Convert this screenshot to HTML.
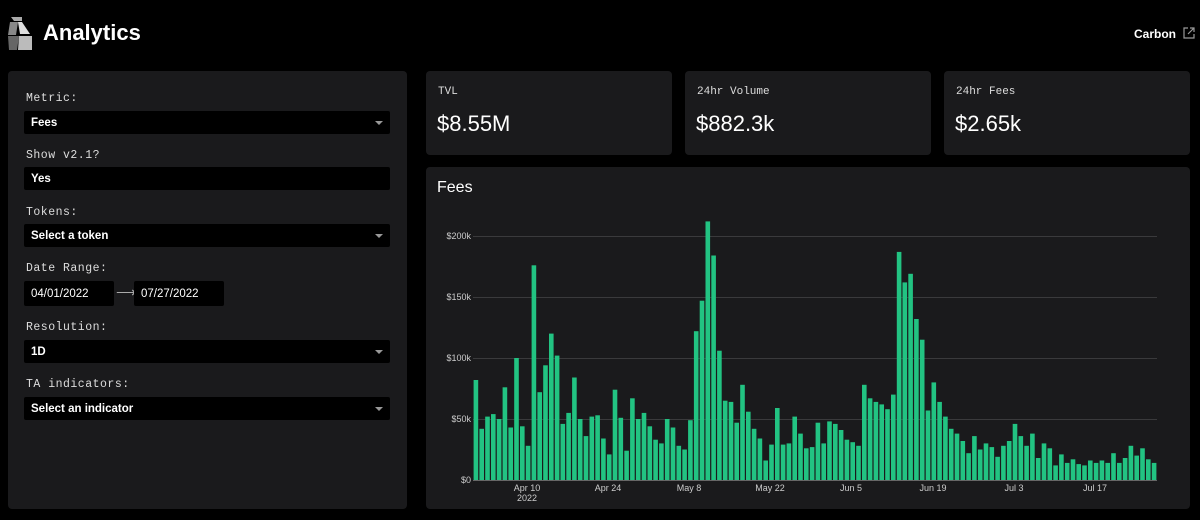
<!DOCTYPE html>
<html><head><meta charset="utf-8"><style>
*{box-sizing:border-box;margin:0;padding:0}
body{width:1200px;height:520px;background:#000;color:#fff;font-family:"Liberation Sans",sans-serif;position:relative;overflow:hidden}
.panel{position:absolute;background:#1a1a1c;border-radius:4px}
.lbl{position:absolute;left:18px;font-family:"Liberation Mono",monospace;font-size:11.5px;color:#ddd;letter-spacing:.5px}
.sel{position:absolute;left:16px;width:366px;height:23px;background:#000;font-size:11.5px;font-weight:bold;padding:6px 0 0 7px;border-radius:2px}
.sel .c{position:absolute;right:7px;top:10px;border-left:4px solid transparent;border-right:4px solid transparent;border-top:4px solid #999}
.card .t{position:absolute;left:12px;top:15px;font-family:"Liberation Mono",monospace;font-size:11px;color:#ddd}
.card .v{position:absolute;left:11px;top:40px;font-size:22px}
</style></head><body>
<svg style="position:absolute;left:8px;top:17px" width="26" height="33" viewBox="0 0 26 33">
<polygon points="3,0 14,0 14,4 6,4" fill="#aaa"/><polygon points="2,5 10,5 8,18 0,18" fill="#888"/><polygon points="10,5 14,5 22,17 12,17" fill="#ddd"/><polygon points="0,19 11,19 9,33 1,33" fill="#666"/><polygon points="11,19 24,19 24,33 10,33" fill="#bbb"/></svg>
<div style="position:absolute;left:43px;top:20px;font-size:22px;font-weight:bold">Analytics</div>
<div style="position:absolute;left:1134px;top:27px;font-size:12px;font-weight:bold">Carbon</div>
<svg style="position:absolute;left:1183px;top:27px" width="12" height="12" viewBox="0 0 12 12" fill="none" stroke="#999" stroke-width="1.2"><path d="M5 1H1v10h10V7M7 1h4v4M11 1L5 7"/></svg>

<div class="panel" style="left:8px;top:71px;width:399px;height:438px">
<div class="lbl" style="top:21px">Metric:</div>
<div class="sel" style="top:40px">Fees<span class="c"></span></div>
<div class="lbl" style="top:78px">Show v2.1?</div>
<div class="sel" style="top:96px">Yes</div>
<div class="lbl" style="top:135px">Tokens:</div>
<div class="sel" style="top:153px">Select a token<span class="c"></span></div>
<div class="lbl" style="top:191px">Date Range:</div>
<div class="sel" style="top:210px;width:90px;height:25px;font-weight:normal;padding-top:7px">04/01/2022</div>
<div style="position:absolute;left:108px;top:213px;color:#aaa;font-size:14px">⟶</div>
<div class="sel" style="left:126px;top:210px;width:90px;height:25px;font-weight:normal;padding-top:7px">07/27/2022</div>
<div class="lbl" style="top:250px">Resolution:</div>
<div class="sel" style="top:269px">1D<span class="c"></span></div>
<div class="lbl" style="top:307px">TA indicators:</div>
<div class="sel" style="top:326px">Select an indicator<span class="c"></span></div>
</div>

<div class="panel card" style="left:426px;top:71px;width:246px;height:84px"><div class="t">TVL</div><div class="v">$8.55M</div></div>
<div class="panel card" style="left:685px;top:71px;width:246px;height:84px"><div class="t">24hr Volume</div><div class="v">$882.3k</div></div>
<div class="panel card" style="left:944px;top:71px;width:246px;height:84px"><div class="t">24hr Fees</div><div class="v">$2.65k</div></div>

<div class="panel" style="left:426px;top:167px;width:764px;height:342px">
<div style="position:absolute;left:11px;top:12px;font-size:16px">Fees</div></div>
<svg id="ch" style="position:absolute;left:0;top:0" width="1200" height="520" font-family="Liberation Sans" font-size="9" fill="#ccc">
<g stroke="#3a3a3c" stroke-width="1"><line x1="473" x2="1157" y1="236.5" y2="236.5"/><line x1="473" x2="1157" y1="297.5" y2="297.5"/><line x1="473" x2="1157" y1="358.5" y2="358.5"/><line x1="473" x2="1157" y1="419.5" y2="419.5"/></g>
<g text-anchor="end"><text x="471" y="239">$200k</text><text x="471" y="300">$150k</text><text x="471" y="361">$100k</text><text x="471" y="422">$50k</text><text x="471" y="483">$0</text></g>
<g id="bars" fill="#22c382"></g>
<line x1="473" x2="1157" y1="480.5" y2="480.5" stroke="#666"/>
<g text-anchor="middle"><text x="527" y="491">Apr 10</text><text x="527" y="501">2022</text><text x="608" y="491">Apr 24</text><text x="689" y="491">May 8</text><text x="770" y="491">May 22</text><text x="851" y="491">Jun 5</text><text x="933" y="491">Jun 19</text><text x="1014" y="491">Jul 3</text><text x="1095" y="491">Jul 17</text></g>
</svg>
<script>
var v=[82,42,52,54,50,76,43,100,44,28,176,72,94,120,102,46,55,84,50,36,52,53,34,21,74,51,24,67,50,55,44,33,30,50,43,28,25,49,122,147,212,184,106,65,64,47,78,56,42,34,16,29,59,29,30,52,38,26,27,47,30,48,46,41,33,31,28,78,67,64,62,58,70,187,162,169,132,115,57,80,64,52,42,38,32,22,36,25,30,27,19,28,32,46,36,28,38,18,30,26,12,21,14,17,13,12,16,14,16,14,22,14,18,28,20,26,17,14,24,22,15,20,24,19,14,20];
v=v.slice(0,118);var g=document.getElementById('bars'),s='',p=684/118;
for(var i=0;i<v.length;i++){var h=v[i]*1.22;s+='<rect x="'+(473.6+i*p).toFixed(1)+'" y="'+(480-h).toFixed(1)+'" width="4.6" height="'+h.toFixed(1)+'"/>';}
g.innerHTML=s;
</script>
</body></html>
